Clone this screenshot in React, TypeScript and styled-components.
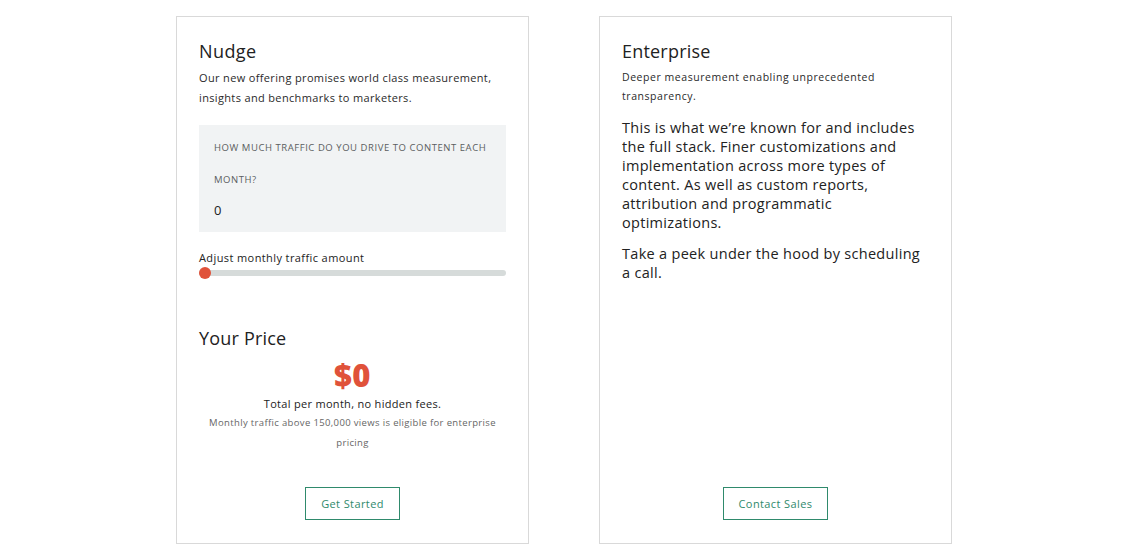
import React from "react";
import styled, { createGlobalStyle } from "styled-components";

const Global = createGlobalStyle`
  html, body { margin: 0; padding: 0; background: #fff; }
  body { font-family: "Open Sans", "Lato", sans-serif; color: #222; }
  * { box-sizing: border-box; }
`;

const Page = styled.div`
  display: flex;
  justify-content: center;
  gap: 70px;
  padding: 16px 0 0 2px;
`;

const Card = styled.section`
  width: 353px;
  height: 528px;
  border: 1px solid #d9d9d9;
  padding: 22px 22px 23px;
  display: flex;
  flex-direction: column;
`;

const Title = styled.h2<{ $ls?: number }>`
  margin: 0;
  font-size: 18px;
  font-weight: 400;
  line-height: 24px;
  letter-spacing: ${(p) => p.$ls ?? 0.2}px;
  color: #222;
`;

const Desc = styled.p<{ $size: number; $lh: number; $ls: number }>`
  margin: 5px 0 0;
  font-size: ${(p) => p.$size}px;
  line-height: ${(p) => p.$lh}px;
  letter-spacing: ${(p) => p.$ls}px;
  color: #2a2a2a;
`;

const Field = styled.div`
  margin-top: 17px;
  background: #f1f3f4;
  padding: 7px 8px 12px 15px;
`;

const FieldLabel = styled.div`
  font-size: 9.5px;
  line-height: 32px;
  text-transform: uppercase;
  color: #5b5e60;
  letter-spacing: 0.55px;
`;

const FieldValue = styled.div`
  margin-top: 4px;
  font-size: 13px;
  line-height: 20px;
  color: #222;
`;

const SliderLabel = styled.div`
  margin-top: 17px;
  font-size: 11px;
  line-height: 18px;
  letter-spacing: 0.4px;
  color: #222;
`;

const Track = styled.div`
  position: relative;
  height: 12px;
  display: flex;
  align-items: center;
`;

const Rail = styled.div`
  width: 100%;
  height: 6px;
  border-radius: 3px;
  background: #d6dbda;
`;

const Thumb = styled.div`
  position: absolute;
  left: 0;
  top: 0;
  width: 12px;
  height: 12px;
  border-radius: 50%;
  background: #e0523a;
`;

const PriceTitle = styled(Title)`
  margin-top: 47px;
`;

const Price = styled.div`
  margin-top: 8px;
  text-align: center;
  font-size: 31px;
  font-weight: 800;
  line-height: 34px;
  letter-spacing: 0.5px;
  color: #e0523a;
`;

const PriceNote = styled.div`
  margin-top: 3px;
  text-align: center;
  font-size: 11px;
  line-height: 18px;
  letter-spacing: 0.3px;
  color: #222;
`;

const FinePrint = styled.div`
  text-align: center;
  font-size: 9.5px;
  line-height: 20px;
  letter-spacing: 0.35px;
  color: #666;
`;

const Body = styled.p<{ $mt: number }>`
  margin: ${(p) => p.$mt}px 0 0;
  font-size: 14.5px;
  line-height: 19px;
  letter-spacing: 0.3px;
  color: #222;
`;

const ButtonRow = styled.div`
  margin-top: auto;
  display: flex;
  justify-content: center;
`;

const OutlineButton = styled.button`
  height: 33px;
  padding: 0 15px;
  border: 1px solid #2f8a6c;
  background: #fff;
  color: #2f8a6c;
  font-family: inherit;
  font-size: 11px;
  letter-spacing: 0.4px;
  cursor: pointer;
`;

export default function App() {
  return (
    <>
      <Global />
      <Page>
        <Card>
          <Title $ls={0.4}>Nudge</Title>
          <Desc $size={11} $lh={20} $ls={0.35}>
            Our new offering promises world class measurement, insights and
            benchmarks to marketers.
          </Desc>
          <Field>
            <FieldLabel>
              How much traffic do you drive to content each month?
            </FieldLabel>
            <FieldValue>0</FieldValue>
          </Field>
          <SliderLabel>Adjust monthly traffic amount</SliderLabel>
          <Track>
            <Rail />
            <Thumb />
          </Track>
          <PriceTitle>Your Price</PriceTitle>
          <Price>$0</Price>
          <PriceNote>Total per month, no hidden fees.</PriceNote>
          <FinePrint>
            Monthly traffic above 150,000 views is eligible for enterprise
            pricing
          </FinePrint>
          <ButtonRow>
            <OutlineButton>Get Started</OutlineButton>
          </ButtonRow>
        </Card>
        <Card>
          <Title>Enterprise</Title>
          <Desc $size={10.5} $lh={19} $ls={0.55}>
            Deeper measurement enabling unprecedented transparency.
          </Desc>
          <Body $mt={12}>
            This is what we’re known for and includes the full stack. Finer
            customizations and implementation across more types of content. As
            well as custom reports, attribution and programmatic optimizations.
          </Body>
          <Body $mt={12}>
            Take a peek under the hood by scheduling a call.
          </Body>
          <ButtonRow>
            <OutlineButton>Contact Sales</OutlineButton>
          </ButtonRow>
        </Card>
      </Page>
    </>
  );
}
